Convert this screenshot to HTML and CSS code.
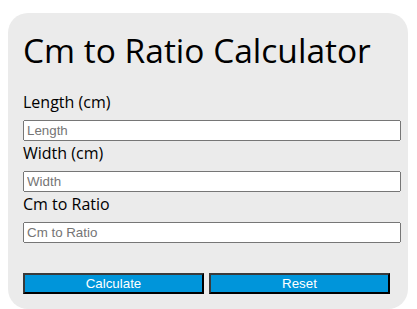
FILE: index.html
```html
<!DOCTYPE html>
<html lang="en">

<head>
    <meta charset="UTF-8">
    <meta name="viewport" content="width=device-width, initial-scale=1.0">
    <title>Cm to Ratio Calculator</title>
    <link rel="stylesheet" href="styles.css">
</head>

<body>

    <div class="calculator">
        <h1>Cm to Ratio Calculator</h1>
        <form onsubmit="return calculate()">
            <label for="length">Length (cm)</label>
            <input type="text" id="length" name="length" placeholder="Length">

            <label for="width">Width (cm)</label>
            <input type="text" id="width" name="width" placeholder="Width">

            <label for="ratio">Cm to Ratio</label>
            <input type="text" id="ratio" name="ratio" placeholder="Cm to Ratio">

            <div class="buttons">
                <button type="submit" class="calc-button">Calculate</button>
                <button type="reset" class="calc-button">Reset</button>
            </div>
        </form>
    </div>

    <script>
        function gcd(a, b) {
            return b ? gcd(b, a % b) : a;
        }

        function calculate() {
            var length = parseFloat(document.getElementById("length").value);
            var width = parseFloat(document.getElementById("width").value);

            if (isNaN(length) || isNaN(width) || width === 0) {
                return false;
            }

            var a = Math.round(length * 100);
            var b = Math.round(width * 100);
            var d = gcd(a, b);
            document.getElementById("ratio").value = (a / d) + ":" + (b / d);
            return false;
        }
    </script>

</body>

</html>
```

FILE: styles.css
```css
body {
    margin: 0;
    font-family: "Open Sans", sans-serif;
}

.calculator {
    width: 400px;
    margin: 13px 0 0 8px;
    padding: 15px;
    box-sizing: border-box;
    background-color: #ebebeb;
    border-radius: 20px;
    color: #000;
}

h1 {
    margin: 0 0 19px 0;
    font-size: 33.5px;
    font-weight: normal;
    line-height: 44px;
}

label {
    display: block;
    font-size: 16px;
    line-height: 22px;
    margin-top: 1px;
    margin-bottom: 5px;
}

input {
    width: 100%;
    margin: 0;
    font-family: Arial, "Liberation Sans", sans-serif;
    font-size: 13.33px;
}

.buttons {
    display: flex;
    gap: 5px;
    margin-top: 30px;
}

button.calc-button {
    width: 181px;
    height: 21px;
    padding: 0;
    background-color: #0095da;
    color: white;
    font-family: Arial, "Liberation Sans", sans-serif;
    font-size: 13.33px;
    border: 2px solid;
    border-color: #3a3a3a #000 #000 #3a3a3a;
    cursor: pointer;
}
```
